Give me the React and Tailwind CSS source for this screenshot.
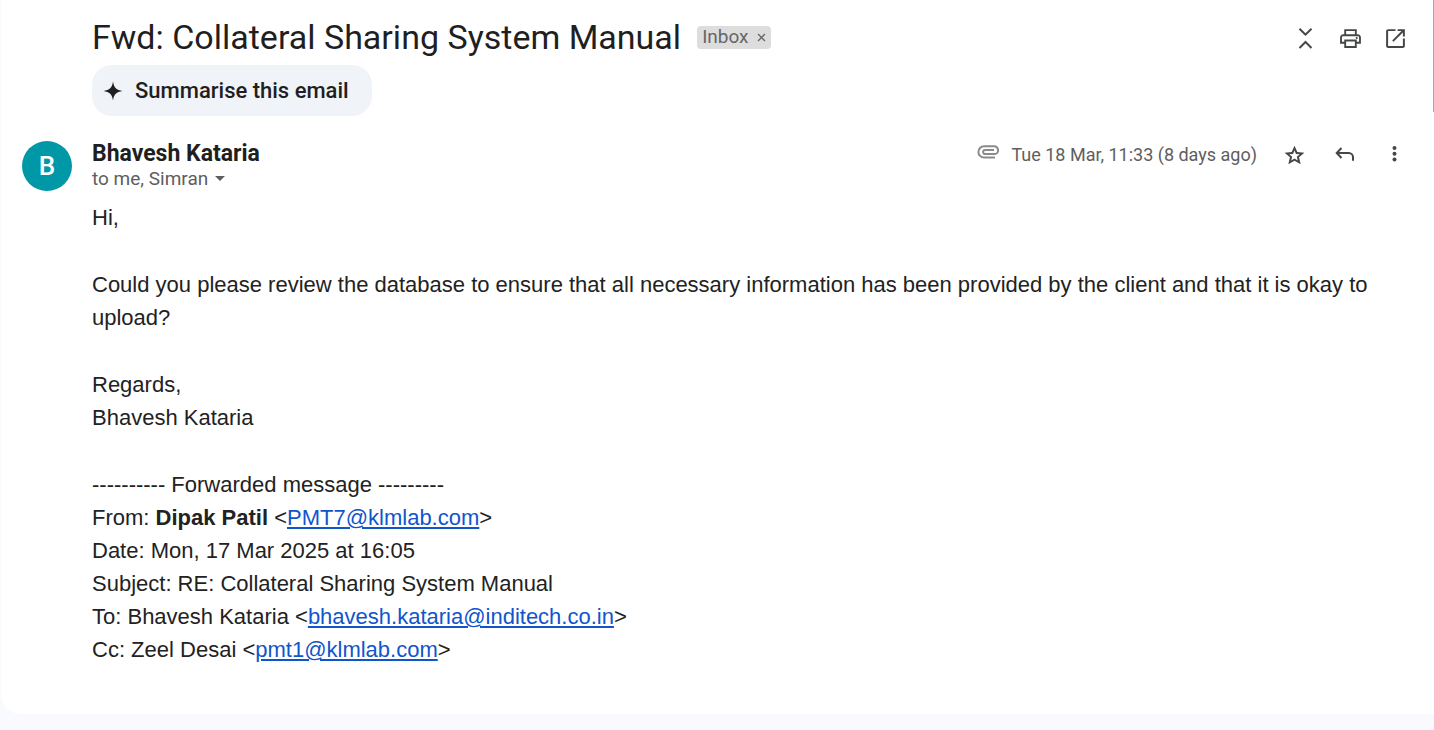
function IconButton({ label, children }) {
  return (
    <button type="button" aria-label={label} className="flex size-[25px] items-center justify-center text-[#444746]">
      {children}
    </button>
  );
}

function Mail({ address }) {
  return (
    <>
      &lt;
      <a href={`mailto:${address}`} className="text-[#1155cc] underline">
        {address}
      </a>
      &gt;
    </>
  );
}

function Toolbar() {
  return (
    <div className="flex gap-5 pt-[26px]">
      <IconButton label="Collapse all">
        <svg viewBox="0 0 25 25" className="size-full" fill="none" stroke="currentColor" strokeWidth="2">
          <path d="M6.500 2.700l6 6 6-6M6.500 22l6-6 6 6" />
        </svg>
      </IconButton>
      <IconButton label="Print all">
        <svg viewBox="0 0 24 24" className="size-full" fill="currentColor">
          <path d="M19 8h-1V3H6v5H5c-1.660 0-3 1.340-3 3v6h4v4h12v-4h4v-6c0-1.660-1.340-3-3-3zM7.800 4.800h8.400V8H7.800V4.800zm8.400 14.400H7.800v-4.400h8.400v4.400zM18 15.200V13H6v2.200H3.800V11c0-.660.540-1.200 1.200-1.200h14c.660 0 1.200.540 1.200 1.200v4.200H18z" />
          <circle cx="18" cy="11.500" r="1" />
        </svg>
      </IconButton>
      <IconButton label="In new window">
        <svg viewBox="0 0 24 24" className="size-full" fill="currentColor">
          <path d="M19.100 19.100H4.900V4.900H12V3H4.900C3.850 3 3 3.850 3 4.900v14.200c0 1.050.850 1.900 1.900 1.900h14.200c1.050 0 1.900-.850 1.900-1.900V12h-1.900v7.100zM14 3v1.900h3.770L8.800 13.870l1.330 1.330 8.970-8.970V10H21V3h-7z" />
        </svg>
      </IconButton>
    </div>
  );
}

function MessageActions() {
  return (
    <div className="flex items-center pt-px pr-px text-[#5e5e5e]">
      <svg viewBox="0 0 22 14" className="mr-3 mb-[6px] h-[14px] w-[22px]" fill="none" stroke="#8a8a8a" strokeWidth="2" aria-hidden="true">
        <path d="M18 12.500H7A5.600 5.600 0 0 1 7 1.300h10.200a3.800 3.800 0 0 1 0 7.800H8.200a2 2 0 0 1 0-4.200H17" />
      </svg>
      <span className="mr-[25px] text-[18px] leading-6">Tue 18 Mar, 11:33 (8 days ago)</span>
      <div className="flex gap-[25px]">
        <IconButton label="Star">
          <svg viewBox="0 0 24 24" className="size-full" fill="currentColor">
            <path d="M21.500 10.300l-6.800-.600L12 3.500 9.300 9.700l-6.800.600 5.150 4.450L6.100 21.400 12 17.900l5.900 3.500-1.550-6.650 5.150-4.450zM12 15.800l-3.100 1.870.820-3.500-2.750-2.370 3.620-.300L12 8.200l1.410 3.300 3.620.300-2.750 2.370.820 3.500L12 15.800z" />
          </svg>
        </IconButton>
        <IconButton label="Reply">
          <svg viewBox="0 0 25 25" className="size-full" fill="none" stroke="currentColor" strokeWidth="2">
            <path d="M9.500 6L4.700 11l4.800 5M4.700 11h12.100a4.200 4.200 0 0 1 4.200 4.200v3.600" />
          </svg>
        </IconButton>
        <IconButton label="More">
          <svg viewBox="0 0 25 25" className="size-full" fill="currentColor">
            <circle cx="12.500" cy="6" r="2" />
            <circle cx="12.500" cy="11.700" r="2" />
            <circle cx="12.500" cy="17.400" r="2" />
          </svg>
        </IconButton>
      </div>
    </div>
  );
}

export default function App() {
  return (
    <div className="min-h-screen bg-[#f8fafd] pb-4 pl-px font-[Roboto,sans-serif] text-[#1f1f1f]">
      <main className="relative min-h-[714px] rounded-bl-[20px] bg-white pr-[26px] pl-[21px]">
        <div className="absolute top-0 right-0 h-28 w-px bg-[#a6a6a6]" />
        <header className="flex items-start justify-between pl-[70px]">
          <div className="flex items-center pt-[14px]">
            <h1 className="text-[34px] leading-[46px]">Fwd: Collateral Sharing System Manual</h1>
            <span className="ml-4 flex h-[23px] items-center gap-2 rounded-[4px] bg-[#ddd] px-[5px] text-[19px] text-[#666]">
              Inbox
              <button type="button" aria-label="Remove label Inbox" className="flex">
                <svg viewBox="0 0 9 9" className="size-[9px]" stroke="currentColor" strokeWidth="1.300">
                  <path d="M1 1l7 7M8 1l-7 7" />
                </svg>
              </button>
            </span>
          </div>
          <Toolbar />
        </header>
        <button type="button" className="mt-[5px] ml-[70px] flex h-[51px] items-center gap-3 rounded-[20px] bg-[#f0f3f8] pr-[23px] pl-[11px] text-[22px] font-medium">
          <svg viewBox="0 0 20 20" className="size-5" fill="currentColor" aria-hidden="true">
            <path d="M10 .5C10.800 6.500 13.500 9.200 19.500 10 13.500 10.800 10.800 13.500 10 19.500 9.200 13.500 6.500 10.800.5 10 6.500 9.200 9.200 6.500 10 .5z" />
          </svg>
          Summarise this email
        </button>
        <section className="mt-[25px] flex gap-5">
          <div className="flex size-[50px] shrink-0 items-center justify-center rounded-full bg-[#0097a7] text-[26px] font-medium text-white">B</div>
          <div className="min-w-0 flex-1">
            <div className="flex items-start justify-between">
              <div>
                <h2 className="text-[23px] leading-[25px] font-bold">Bhavesh Kataria</h2>
                <button type="button" className="flex items-center gap-[7px] text-[19px] leading-[25px] text-[#5e5e5e]">
                  to me, Simran
                  <svg viewBox="0 0 10 5" className="h-[5px] w-[10px]" fill="currentColor" aria-hidden="true">
                    <path d="M0 0h10L5 5z" />
                  </svg>
                </button>
              </div>
              <MessageActions />
            </div>
            <div className="mt-[10px] flex flex-col gap-[34px] font-['Liberation_Sans',Arial,sans-serif] text-[22px] leading-[33px] text-[#222]">
              <p>Hi,</p>
              <p>
                Could you please review the database to ensure that all necessary information has been provided by the client and that it is okay to
                upload?
              </p>
              <p>
                Regards,
                <br />
                Bhavesh Kataria
              </p>
              <p>
                ---------- Forwarded message ---------
                <br />
                From: <b>Dipak Patil</b> <Mail address="PMT7@klmlab.com" />
                <br />
                Date: Mon, 17 Mar 2025 at 16:05
                <br />
                Subject: RE: Collateral Sharing System Manual
                <br />
                To: Bhavesh Kataria <Mail address="bhavesh.kataria@inditech.co.in" />
                <br />
                Cc: Zeel Desai <Mail address="pmt1@klmlab.com" />
              </p>
            </div>
          </div>
        </section>
      </main>
    </div>
  );
}
